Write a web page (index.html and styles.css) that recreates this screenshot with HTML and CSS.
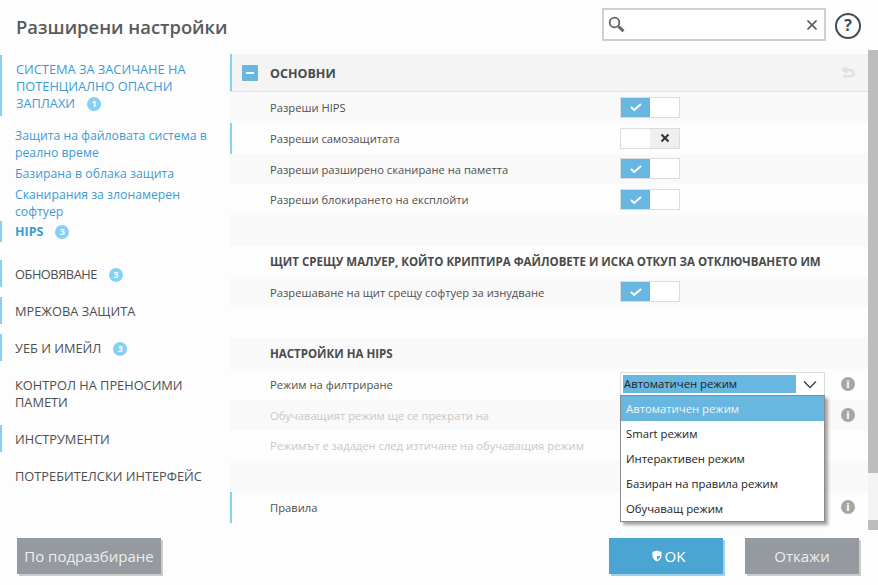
FILE: index.html
```html
<!DOCTYPE html>
<html lang="bg">
<head>
<meta charset="utf-8">
<title>Разширени настройки</title>
<link rel="stylesheet" href="styles.css">
</head>
<body>
<div class="app">
  <header class="top">
    <h1 class="title">Разширени настройки</h1>
    <div class="search">
      <svg class="ico-search" width="18" height="18" viewBox="0 0 18 18"><circle cx="6.500" cy="6.500" r="4.800" fill="none" stroke="#606468" stroke-width="1.800"/><path d="M10.500 10.500l5 4.600" stroke="#606468" stroke-width="3" fill="none"/></svg>
      <svg class="ico-clear" width="10" height="10" viewBox="0 0 10 10"><path d="M.5.500l9 9M9.500.500l-9 9" stroke="#5b5f62" stroke-width="1.600" fill="none"/></svg>
    </div>
    <div class="help">?</div>
  </header>
  <div class="middle">
    <nav class="side">
      <div class="nav-head mark blue h-a">СИСТЕМА ЗА ЗАСИЧАНЕ НА ПОТЕНЦИАЛНО ОПАСНИ ЗАПЛАХИ<i class="badge">1</i></div>
      <div class="subs">
        <a class="sub">Защита на файловата система в реално време</a>
        <a class="sub">Базирана в облака защита</a>
        <a class="sub">Сканирания за злонамерен софтуер</a>
        <a class="sub strong mark">HIPS<i class="badge">3</i></a>
      </div>
      <div class="nav-head mark tight">ОБНОВЯВАНЕ<i class="badge">3</i></div>
      <div class="nav-head mark">МРЕЖОВА ЗАЩИТА</div>
      <div class="nav-head mark">УЕБ И ИМЕЙЛ<i class="badge">3</i></div>
      <div class="nav-head">КОНТРОЛ НА ПРЕНОСИМИ ПАМЕТИ</div>
      <div class="nav-head mark">ИНСТРУМЕНТИ</div>
      <div class="nav-head">ПОТРЕБИТЕЛСКИ ИНТЕРФЕЙС</div>
    </nav>
    <main class="panel">
      <div class="list">
        <div class="sec-head">
          <span class="minus"></span>
          <span class="sec-title">ОСНОВНИ</span>
          <svg class="undo" width="14" height="14" viewBox="0 0 14 14"><path d="M0 3.800L6 0v2.800h3.500a4.500 4.500 0 0 1 0 9H2V9h7.500a1.700 1.700 0 0 0 0-3.400H6v2.800z" fill="#e2e2e2"/></svg>
        </div>
        <div class="row odd"><label>Разреши HIPS</label><span class="sw on"><b><svg width="14" height="10" viewBox="0 0 14 10"><path d="M2 5l3.200 3L12 2" fill="none" stroke="#fff" stroke-width="2"/></svg></b><em></em></span></div>
        <div class="row even mark"><label>Разреши самозащитата</label><span class="sw off"><em></em><b><svg width="10" height="10" viewBox="0 0 10 10"><path d="M1.500 1.500l7 7M8.500 1.500l-7 7" stroke="#333" stroke-width="2" fill="none"/></svg></b></span></div>
        <div class="row odd"><label>Разреши разширено сканиране на паметта</label><span class="sw on"><b><svg width="14" height="10" viewBox="0 0 14 10"><path d="M2 5l3.200 3L12 2" fill="none" stroke="#fff" stroke-width="2"/></svg></b><em></em></span></div>
        <div class="row even"><label>Разреши блокирането на експлойти</label><span class="sw on"><b><svg width="14" height="10" viewBox="0 0 14 10"><path d="M2 5l3.200 3L12 2" fill="none" stroke="#fff" stroke-width="2"/></svg></b><em></em></span></div>
        <div class="row odd"></div>
        <div class="row even"><label class="hd">ЩИТ СРЕЩУ МАЛУЕР, КОЙТО КРИПТИРА ФАЙЛОВЕТЕ И ИСКА ОТКУП ЗА ОТКЛЮЧВАНЕТО ИМ</label></div>
        <div class="row odd"><label>Разрешаване на щит срещу софтуер за изнудване</label><span class="sw on"><b><svg width="14" height="10" viewBox="0 0 14 10"><path d="M2 5l3.200 3L12 2" fill="none" stroke="#fff" stroke-width="2"/></svg></b><em></em></span></div>
        <div class="row even"></div>
        <div class="row odd"><label class="hd">НАСТРОЙКИ НА HIPS</label></div>
        <div class="row even"><label>Режим на филтриране</label><span class="sel"><span class="sel-val">Автоматичен режим</span><svg width="14" height="9" viewBox="0 0 14 9"><path d="M1 1.500l6 6 6-6" fill="none" stroke="#444" stroke-width="1.500"/></svg></span><i class="info">i</i></div>
        <div class="row odd"><label class="dim">Обучаващият режим ще се прекрати на</label><i class="info">i</i></div>
        <div class="row even"><label class="dim">Режимът е зададен след изтичане на обучаващия режим</label></div>
        <div class="row odd"></div>
        <div class="row even mark"><label>Правила</label><i class="info">i</i></div>
        <ul class="menu">
          <li class="cur">Автоматичен режим</li>
          <li>Smart режим</li>
          <li>Интерактивен режим</li>
          <li>Базиран на правила режим</li>
          <li>Обучаващ режим</li>
        </ul>
      </div>
      <div class="scroll"><div class="thumb"></div><div class="track"></div><div class="end"></div></div>
    </main>
  </div>
  <footer class="foot">
    <button class="btn grey wide">По подразбиране</button>
    <div class="foot-right">
      <button class="btn ok"><svg width="10" height="12" viewBox="0 0 11 13"><path d="M5.500.500L10.500 2v4c0 3-2 5.300-5 6.500C2.500 11.300.5 9 .5 6V2z" fill="#fff"/><path d="M5.500 2.500v4H9C8.800 8.500 7.500 10 5.500 10.900z" fill="#4aa5d3"/></svg>OK</button>
      <button class="btn grey">Откажи</button>
    </div>
  </footer>
</div>
</body>
</html>
```
FILE: styles.css
```css
* { box-sizing: border-box; }
html, body { margin: 0; padding: 0; }
body { width: 878px; height: 585px; background: #fdfdfd; font-family: "Open Sans", "Noto Sans", sans-serif; color: #4f4f4f; overflow: hidden; }
.app { display: flex; flex-direction: column; height: 585px; }

.top { height: 54px; flex: none; display: flex; align-items: flex-start; padding: 8px 17px 0 16px; }
.title { margin: 6px 0 0; font-size: 18.4px; line-height: 26px; font-weight: 600; color: #5a5a5a; flex: 1; }
.search { width: 224px; height: 33px; border: 2px solid #cfcfcf; background: #fff; display: flex; align-items: center; justify-content: space-between; padding: 0 7px 0 4px; }
.help { width: 26px; height: 26px; margin: 5px 0 0 9px; border: 2px solid #3f4c57; border-radius: 50%; text-align: center; font-size: 16px; line-height: 21px; font-weight: 700; color: #3f4c57; }

.middle { height: 484px; flex: none; display: flex; }
.side { width: 230px; flex: none; font-size: 12.8px; line-height: 17px; }
.mark { box-shadow: inset 2px 0 0 #85d0f5; }
.nav-head { padding: 6px 15px 4px; margin-bottom: 10px; color: #4f4f4f; }
.nav-head.h-a { padding: 6px 30px 4px 16px; margin: 1px 0 8px; }
.tight { letter-spacing: -.45px; }
.blue, .sub { color: #3d9bd4; }
.subs { display: flex; flex-direction: column; margin-bottom: 18px; }
.sub { padding: 3px 15px 1px; font-size: 12.25px; line-height: 17px; }
.sub.strong { font-weight: 700; height: 21px; font-size: 12.5px; padding: 2px 15px; }
.badge { display: inline-block; width: 14px; height: 14px; margin-left: 12px; border-radius: 50%; background: #85d0f5; color: #fff; font-size: 9px; font-weight: 700; font-style: normal; line-height: 14px; text-align: center; vertical-align: 1px; letter-spacing: 0; }

.panel { width: 648px; display: flex; align-items: flex-start; }
.list { position: relative; width: 638px; font-size: 11.2px; }
.sec-head { height: 38px; background: #f4f4f4; border-bottom: 1px solid #e3e3e3; display: flex; align-items: center; padding: 1px 0 0 12px; box-shadow: inset 2px 0 0 #85d0f5; }
.minus { width: 16px; height: 16px; border-radius: 1px; background: #67b7e0; margin-right: 12px; display: flex; align-items: center; justify-content: center; }
.minus::after { content: ""; width: 8px; height: 2px; background: #fff; }
.sec-title { font-size: 12.5px; font-weight: 700; color: #4a4a4a; flex: 1; }
.undo { margin-right: 13px; }
.row { height: 30.75px; display: flex; align-items: center; padding-left: 40px; position: relative; }
.row.odd { background: #f9f9f9; }
.row.even { background: #fdfdfd; }
.row label { width: 350px; flex: none; padding-top: .5px; color: #505050; white-space: nowrap; }
.row label.hd { font-size: 11.5px; font-weight: 700; color: #4a4a4a; }
.row label.dim { color: #c8c8c8; }

.sw { width: 60px; height: 21px; border: 1px solid #dcdcdc; background: #fff; display: flex; }
.sw b, .sw em { flex: 1; display: flex; align-items: center; justify-content: center; }
.sw.on b { background: #67b7e0; }
.sw.off b { background: #efefef; }

.sel { width: 205px; height: 24px; border: 1px solid #dcdcdc; background: #fff; display: flex; align-items: center; padding: 0 7px 0 2px; justify-content: space-between; }
.sel-val { width: 173px; height: 18px; background: #67b7e0; color: #222; font-size: 11.3px; line-height: 18px; padding-left: 1px; white-space: nowrap; }
.info { position: absolute; left: 611px; top: 8px; width: 14px; height: 14px; border-radius: 50%; background: #a6a6a6; color: #fff; font-size: 11px; font-weight: 700; font-style: normal; line-height: 14px; text-align: center; }

.menu { position: absolute; left: 390px; top: 341px; width: 205px; margin: 0; padding: 0; list-style: none; background: #fff; border: 1px solid #8a8a8a; box-shadow: 3px 3px 3px rgba(0,0,0,.35); font-size: 11.3px; color: #1c1c1c; z-index: 2; }
.menu li { height: 25px; line-height: 26px; padding-left: 5px; }
.menu li.cur { background: #67b7e0; color: #f4f4f4; }

.scroll { width: 10px; margin-top: -4px; display: flex; flex-direction: column; }
.thumb { height: 423px; background: #bdbdbd; }
.track { height: 47px; background: #f3f3f3; }
.end { height: 10px; background: #bdbdbd; }

.foot { flex: 1; display: flex; justify-content: space-between; align-items: flex-start; padding: 0 19px 0 17px; }
.btn { height: 36px; border: 0; color: #fff; font-family: inherit; font-size: 15px; display: flex; align-items: center; justify-content: center; padding: 0; }
.grey { width: 114px; background: #949a9f; box-shadow: 2px 2px 0 #ccc; color: #eee; }
.grey.wide { width: 144px; }
.ok { width: 114px; padding-left: 5px; background: #4aa5d3; box-shadow: 2px 2px 0 #a0d2ec; gap: 3px; margin-right: 22px; }
.foot-right { display: flex; }
```
